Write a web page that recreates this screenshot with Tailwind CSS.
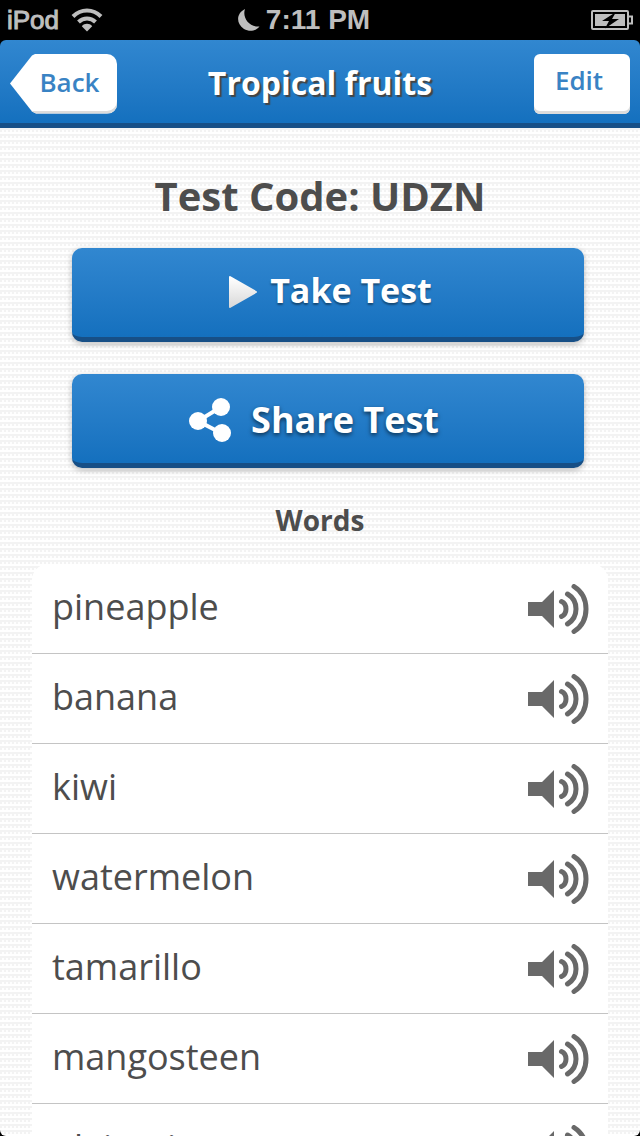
<!DOCTYPE html>
<html lang="en">
<head>
    <meta charset="UTF-8">
    <meta name="viewport" content="width=device-width, initial-scale=1.0">
    <title>Tropical fruits</title>
    <script src="https://cdn.jsdelivr.net/npm/@tailwindcss/browser@4"></script>
</head>
<body class="bg-black font-['Open_Sans','Noto_Sans',sans-serif] text-[#4d4d4d]">
    <div class="h-screen flex flex-col overflow-hidden">

        <!-- Status bar -->
        <div class="h-10 shrink-0 grid grid-cols-[1fr_auto_1fr] items-center px-[7px] text-[#bebebe] font-['Liberation_Sans',sans-serif]">
            <div class="flex items-center gap-3">
                <span class="text-[26px] leading-10 [-webkit-text-stroke:1px_currentColor]">iPod</span>
                <svg class="w-8 h-6" viewBox="0 0 32 24" fill="none" stroke="currentColor" stroke-width="4">
                    <path d="M2 8.500C10 .5 22 .5 30 8.500"/>
                    <path d="M7.500 14C12.500 9.200 19.500 9.200 24.500 14"/>
                    <path d="M16 23.500L10.800 18.200C13.500 15 18.500 15 21.200 18.200z" fill="currentColor" stroke="none"/>
                </svg>
            </div>
            <div class="flex items-center gap-[6px] pr-8">
                <svg class="w-[22px] h-[22px]" viewBox="0 0 22 22" fill="currentColor">
                    <path d="M7 0C4 8 11 18.500 21.500 17.500C18 22 11.500 23.200 6 20C-2.500 14.500-1.500 4 7 0z"/>
                </svg>
                <span class="text-[28px] leading-10 font-bold">7:11 PM</span>
            </div>
            <svg class="justify-self-end w-[42px] h-5" viewBox="0 0 42 20" fill="none">
                <rect x="1" y="1" width="36" height="18" rx="1" stroke="currentColor" stroke-width="2"/>
                <rect x="4" y="4" width="30" height="12" fill="currentColor"/>
                <path d="M38 6.500h3v7h-3" stroke="currentColor" stroke-width="2"/>
                <path d="M25 2L11 11h7L14 18.500L28 9h-7z" fill="#000"/>
            </svg>
        </div>

        <!-- Header -->
        <header class="h-22 shrink-0 grid grid-cols-[1fr_auto_1fr] items-center pt-1 px-[10px] rounded-t-md border-b-5 border-[#174f86] bg-linear-to-b from-[#3187d0] to-[#1470be]">
            <button onclick="history.back()" class="justify-self-start w-[107px] h-15 pl-3 pb-0.5 rounded-r-[10px] bg-white text-[#3983c4] text-[26px] font-semibold shadow-[inset_0_-3px_0_#dcdcdc] [clip-path:polygon(0_50%,22px_2px,26px_0,100%_0,100%_100%,26px_100%,22px_58px)]">Back</button>
            <h1 class="pb-0.5 text-white text-[32px] leading-10 font-bold [text-shadow:2px_2px_1px_#444]">Tropical fruits</h1>
            <button class="justify-self-end w-24 h-15 pr-1.5 pb-1.5 rounded-md bg-white text-[#3983c4] text-[26px] font-semibold shadow-[inset_0_-3px_0_#dcdcdc]">Edit</button>
        </header>

        <main class="flex-1 min-h-0 overflow-y-auto [scrollbar-width:none] rounded-b-md bg-[linear-gradient(#f3f3f3_0_2px,transparent_2px_4px,#fff_4px_6px),linear-gradient(90deg,#f3f3f3_0_2px,#fefefe_2px_4px)] bg-[length:4px_6px]">
            <h2 class="pt-10 text-center text-[40px] leading-14 font-bold">Test Code: UDZN</h2>

            <div class="pt-6 pl-[72px] pr-14 flex flex-col gap-8">
                <button class="h-[94px] flex items-center justify-center gap-3 pb-1 pl-1 rounded-[10px] border-b-5 border-[#174f86] bg-linear-to-b from-[#3187d0] to-[#1470be] text-white text-[34px] font-bold [text-shadow:0_2px_2px_#0006] shadow-[0_2px_6px_#0004]">
                    <svg class="w-[30px] h-[34px]" viewBox="0 0 30 34">
                        <defs>
                            <linearGradient id="play" x1="0" y1="0" x2="0" y2="1">
                                <stop offset="0" stop-color="#fff"/>
                                <stop offset="1" stop-color="#d9d9d9"/>
                            </linearGradient>
                        </defs>
                        <path d="M2 3L28 18L2 33z" fill="url(#play)" stroke="url(#play)" stroke-width="2" stroke-linejoin="round"/>
                    </svg>
                    Take Test
                </button>
                <button class="h-[94px] pt-0.5 pr-7 flex items-center justify-center gap-5 rounded-[10px] border-b-5 border-[#174f86] bg-linear-to-b from-[#3187d0] to-[#1470be] text-white text-[36px] font-bold [text-shadow:0_2px_4px_#0009] shadow-[0_2px_6px_#0004]">
                    <svg class="w-[42px] h-11" viewBox="0 0 42 44" fill="#fff">
                        <path d="M32 9L9 23L32 35" fill="none" stroke="#fff" stroke-width="4"/>
                        <circle cx="32" cy="9" r="9"/>
                        <circle cx="9" cy="23" r="9"/>
                        <circle cx="33" cy="35" r="9"/>
                    </svg>
                    Share Test
                </button>
            </div>

            <h3 class="pt-8 text-center text-[28px] leading-10 font-bold">Words</h3>

            <ul id="words" class="mt-6 mx-8 rounded-t-2xl bg-white divide-y divide-[#c4c4c4]"></ul>
        </main>
    </div>

    <script>
        const words = ['pineapple', 'banana', 'kiwi', 'watermelon', 'tamarillo', 'mangosteen', 'plaintain'];
        const list = document.getElementById('words');

        words.forEach(word => {
            const li = document.createElement('li');
            li.className = 'h-[90px] pt-px pl-5 pr-[19px] flex items-center justify-between text-[36px]';
            li.innerHTML = `
                <span class="pb-1">${word}</span>
                <button aria-label="Play ${word}">
                    <svg class="w-[61px] h-[50px]" viewBox="0 0 61 50" fill="none" stroke="#696969" stroke-width="5" stroke-linecap="round">
                        <path d="M0 18h14L26 6v38L14 32H0z" fill="#696969" stroke="none"/>
                        <path d="M33.500 17.500Q38 19.500 38 25T33.500 32.500"/>
                        <path d="M39.500 10Q48 15 48 25T39.500 40"/>
                        <path d="M46 2.500Q58 10 58 25T46 47.500"/>
                    </svg>
                </button>
            `;
            list.appendChild(li);
        });
    </script>
</body>
</html>
